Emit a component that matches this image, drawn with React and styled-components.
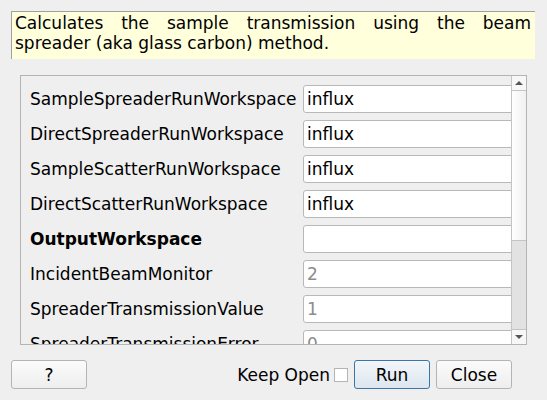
import React from "react";
import styled, { createGlobalStyle } from "styled-components";

const GlobalStyle = createGlobalStyle`
  html, body {
    margin: 0;
    padding: 0;
    background: #efefef;
  }
  body {
    font-family: "DejaVu Sans", "Liberation Sans", sans-serif;
    font-size: 17px;
    color: #000;
  }
`;

const Dialog = styled.div`
  width: 547px;
  height: 400px;
  box-sizing: border-box;
  padding: 11px 12px 0 11px;
  display: flex;
  flex-direction: column;
`;

const Description = styled.div`
  height: 48px;
  box-sizing: border-box;
  background: #ffffdc;
  border-top: 1px solid #a0a0a0;
  border-left: 1px solid #a0a0a0;
  padding: 1px 4px 0 3px;
  line-height: 20px;
  text-align: justify;
`;

const ScrollFrame = styled.div`
  margin: 16px 8px 0 9px;
  height: 270px;
  box-sizing: border-box;
  border: 1px solid #b4b4b4;
  display: flex;
`;

const Viewport = styled.div`
  flex: 1;
  overflow: hidden;
`;

const Form = styled.div`
  display: grid;
  grid-template-columns: 265px 240px;
  column-gap: 8px;
  row-gap: 7px;
  padding: 9px 0 0 9px;
  align-items: center;
`;

const Label = styled.div`
  white-space: nowrap;
  font-weight: ${(p) => (p.$bold ? "bold" : "normal")};
`;

const Field = styled.div`
  height: 28px;
  box-sizing: border-box;
  background: #fff;
  border: 1px solid #b8b8b8;
  border-radius: 3px;
  padding: 0 3px;
  line-height: 26px;
  color: ${(p) => (p.$muted ? "#8c8c8c" : "#000")};
`;

const ScrollBar = styled.div`
  width: 14px;
  border-left: 1px solid #c4c4c4;
  display: flex;
  flex-direction: column;
  background: #e2e2e2;
`;

const ArrowButton = styled.div`
  height: 14px;
  background: #f7f7f7;
  display: flex;
  align-items: center;
  justify-content: center;
  border-${(p) => (p.$down ? "top" : "bottom")}: 1px solid #c4c4c4;
`;

const Arrow = styled.div`
  width: 0;
  height: 0;
  border-left: 4px solid transparent;
  border-right: 4px solid transparent;
  ${(p) =>
    p.$down ? "border-top: 4px solid #555;" : "border-bottom: 4px solid #555;"}
`;

const Thumb = styled.div`
  height: 149px;
  background: linear-gradient(to right, #ffffff, #f0f0f0);
  border-bottom: 1px solid #c4c4c4;
`;

const Trough = styled.div`
  flex: 1;
`;

const Footer = styled.div`
  margin-top: 15px;
  display: flex;
  align-items: center;
  gap: 6px;
  padding-right: 23px;
`;

const Button = styled.button`
  width: 76px;
  height: 29px;
  box-sizing: border-box;
  font-family: inherit;
  font-size: 17px;
  color: #000;
  border-radius: 3px;
  border: 1px solid ${(p) => (p.$primary ? "#3a77a8" : "#b4b4b4")};
  background: ${(p) =>
    p.$primary
      ? "linear-gradient(#f2f6fa, #dde6ee)"
      : "linear-gradient(#fbfbfb, #eeeeee)"};
  padding: 0;
`;

const Spacer = styled.div`
  flex: 1;
`;

const KeepOpen = styled.label`
  display: flex;
  align-items: center;
  gap: 4px;
`;

const Check = styled.span`
  width: 12px;
  height: 12px;
  background: #fff;
  border: 1px solid #b4b4b4;
`;

const rows = [
  { name: "SampleSpreaderRunWorkspace", value: "influx" },
  { name: "DirectSpreaderRunWorkspace", value: "influx" },
  { name: "SampleScatterRunWorkspace", value: "influx" },
  { name: "DirectScatterRunWorkspace", value: "influx" },
  { name: "OutputWorkspace", value: "", bold: true },
  { name: "IncidentBeamMonitor", value: "2", muted: true },
  { name: "SpreaderTransmissionValue", value: "1", muted: true },
  { name: "SpreaderTransmissionError", value: "0", muted: true },
];

export default function App() {
  return (
    <>
      <GlobalStyle />
      <Dialog>
        <Description>
          Calculates the sample transmission using the beam spreader (aka
          glass carbon) method.
        </Description>
        <ScrollFrame>
          <Viewport>
            <Form>
              {rows.map((r) => (
                <React.Fragment key={r.name}>
                  <Label $bold={r.bold}>{r.name}</Label>
                  <Field $muted={r.muted}>{r.value}</Field>
                </React.Fragment>
              ))}
            </Form>
          </Viewport>
          <ScrollBar>
            <ArrowButton>
              <Arrow />
            </ArrowButton>
            <Thumb />
            <Trough />
            <ArrowButton $down>
              <Arrow $down />
            </ArrowButton>
          </ScrollBar>
        </ScrollFrame>
        <Footer>
          <Button>?</Button>
          <Spacer />
          <KeepOpen>
            Keep Open <Check />
          </KeepOpen>
          <Button $primary>Run</Button>
          <Button>Close</Button>
        </Footer>
      </Dialog>
    </>
  );
}
